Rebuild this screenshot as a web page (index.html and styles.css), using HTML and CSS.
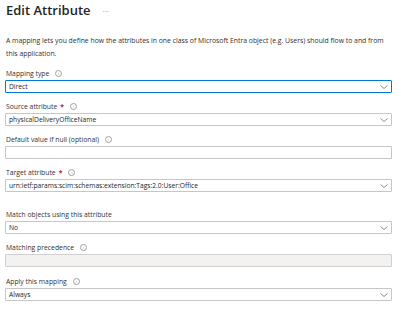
FILE: index.html
```html
<!DOCTYPE html>
<html>

<head>
    <title>Edit Attribute</title>
    <link rel="stylesheet" href="styles.css">
</head>

<body>
    <div class="panel">
        <div class="header">
            <h1>Edit Attribute</h1>
            <span class="more">&middot;&middot;&middot;</span>
        </div>

        <p class="intro">A mapping lets you define how the attributes in one class of Microsoft Entra object (e.g. Users) should flow to and from this application.</p>

        <div class="field">
            <label>Mapping type <span class="info">i</span></label>
            <div class="box select focus">Direct
                <svg class="chev" viewBox="0 0 8 4"><polyline points="0.5,0.5 4,3.5 7.5,0.5" /></svg>
            </div>
        </div>

        <div class="field">
            <label>Source attribute <span class="req">*</span> <span class="info">i</span></label>
            <div class="box select">physicalDeliveryOfficeName
                <svg class="chev" viewBox="0 0 8 4"><polyline points="0.5,0.5 4,3.5 7.5,0.5" /></svg>
            </div>
        </div>

        <div class="field">
            <label>Default value if null (optional) <span class="info">i</span></label>
            <div class="box"></div>
        </div>

        <div class="field">
            <label>Target attribute <span class="req">*</span> <span class="info">i</span></label>
            <div class="box select">urn:ietf:params:scim:schemas:extension:Tags:2.0:User:Office
                <svg class="chev" viewBox="0 0 8 4"><polyline points="0.5,0.5 4,3.5 7.5,0.5" /></svg>
            </div>
        </div>

        <div class="field spaced">
            <label>Match objects using this attribute</label>
            <div class="box select">No
                <svg class="chev" viewBox="0 0 8 4"><polyline points="0.5,0.5 4,3.5 7.5,0.5" /></svg>
            </div>
        </div>

        <div class="field">
            <label>Matching precedence <span class="info">i</span></label>
            <div class="box disabled"></div>
        </div>

        <div class="field last">
            <label>Apply this mapping <span class="info">i</span></label>
            <div class="box select">Always
                <svg class="chev" viewBox="0 0 8 4"><polyline points="0.5,0.5 4,3.5 7.5,0.5" /></svg>
            </div>
        </div>
    </div>
</body>

</html>
```

FILE: styles.css
```css
body {
    font-family: "Open Sans", Arial, sans-serif;
    margin: 0;
    color: #323130;
    background-color: #ffffff;
}

.panel {
    padding: 0 7px 0 5px;
}

.header {
    display: flex;
    align-items: center;
    gap: 12px;
    padding: 1px 0 0 1px;
}

h1 {
    font-size: 13px;
    font-weight: 600;
    margin: 0;
    color: #252423;
}

.more {
    font-size: 8px;
    color: #8a8886;
}

.intro {
    font-size: 6.85px;
    line-height: 13px;
    margin: 15px 0 9px 1px;
}

.field {
    margin-bottom: 9px;
}

.field.spaced {
    margin-top: 18px;
}

.field.last {
    margin-top: 10px;
}

label {
    display: flex;
    align-items: center;
    gap: 3px;
    font-size: 6.8px;
    line-height: 9px;
    margin: 0 0 2px 1px;
}

.req {
    color: #a4262c;
    font-weight: 700;
}

.info {
    display: inline-flex;
    align-items: center;
    justify-content: center;
    width: 5px;
    height: 5px;
    border: 0.8px solid #a19f9d;
    border-radius: 50%;
    font-size: 4px;
    color: #8a8886;
    margin-left: 3px;
}

.box {
    position: relative;
    height: 11px;
    border: 1px solid #c8c6c4;
    border-radius: 1px;
    font-size: 6.7px;
    line-height: 11px;
    padding-left: 3px;
    color: #201f1e;
}

.box.focus {
    border-color: #0078d4;
}

.box.disabled {
    background-color: #f3f2f1;
    border-color: #d2d0ce;
}

.chev {
    position: absolute;
    right: 3px;
    top: 4px;
    width: 8px;
    height: 4px;
    fill: none;
    stroke: #605e5c;
    stroke-width: 0.7;
}
```
